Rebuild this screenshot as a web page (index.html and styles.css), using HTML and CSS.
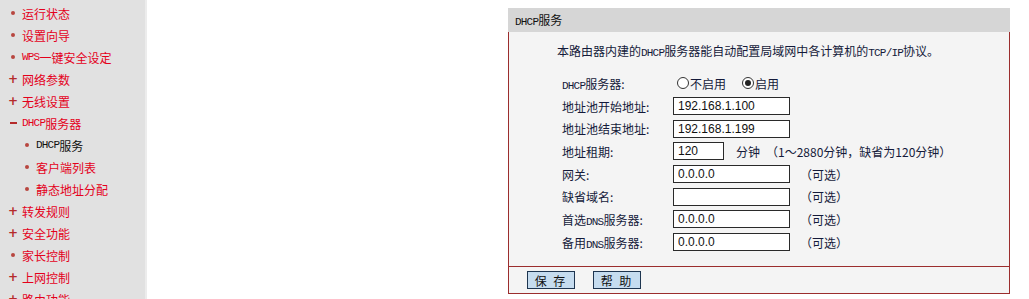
FILE: index.html
```html
<!doctype html>
<html lang="zh-CN">
    <head>
        <meta charset="UTF-8">
        <title>DHCP服务</title>
        <link rel="stylesheet" href="styles.css">
    </head>
    <body>
        <ul class="menu">
            <li class="menu-item"><span class="mark dot"></span>运行状态</li>
            <li class="menu-item"><span class="mark dot"></span>设置向导</li>
            <li class="menu-item"><span class="mark dot"></span><span class="latin">WPS</span>一键安全设定</li>
            <li class="menu-item"><span class="mark plus">+</span>网络参数</li>
            <li class="menu-item"><span class="mark plus">+</span>无线设置</li>
            <li class="menu-item"><span class="mark minus"></span><span class="latin">DHCP</span>服务器</li>
            <li class="menu-item sub current"><span class="mark dot"></span><span class="latin">DHCP</span>服务</li>
            <li class="menu-item sub"><span class="mark dot"></span>客户端列表</li>
            <li class="menu-item sub"><span class="mark dot"></span>静态地址分配</li>
            <li class="menu-item"><span class="mark plus">+</span>转发规则</li>
            <li class="menu-item"><span class="mark plus">+</span>安全功能</li>
            <li class="menu-item"><span class="mark dot"></span>家长控制</li>
            <li class="menu-item"><span class="mark plus">+</span>上网控制</li>
            <li class="menu-item"><span class="mark plus">+</span>路由功能</li>
        </ul>

        <div class="content">
            <div class="panel">
                <div class="panel-title"><span class="latin">DHCP</span>服务</div>
                <div class="panel-body">
                    <p class="intro">本路由器内建的<span class="latin">DHCP</span>服务器能自动配置局域网中各计算机的<span class="latin">TCP/IP</span>协议。</p>
                    <div class="form-grid">
                        <label><span class="latin">DHCP</span>服务器:</label>
                        <div class="field">
                            <label class="radio"><input type="radio" name="dhcp">不启用</label>
                            <label class="radio"><input type="radio" name="dhcp" checked>启用</label>
                        </div>

                        <label for="start-ip">地址池开始地址:</label>
                        <div class="field"><input class="text-box" id="start-ip" type="text" value="192.168.1.100"></div>

                        <label for="end-ip">地址池结束地址:</label>
                        <div class="field"><input class="text-box" id="end-ip" type="text" value="192.168.1.199"></div>

                        <label for="lease">地址租期:</label>
                        <div class="field">
                            <input class="text-box short" id="lease" type="text" value="120">
                            <span class="unit">分钟</span>
                            <span class="hint">（1～2880分钟，缺省为120分钟）</span>
                        </div>

                        <label for="gateway">网关:</label>
                        <div class="field"><input class="text-box" id="gateway" type="text" value="0.0.0.0"><span class="hint optional">（可选）</span></div>

                        <label for="domain">缺省域名:</label>
                        <div class="field"><input class="text-box" id="domain" type="text" value=""><span class="hint optional">（可选）</span></div>

                        <label for="dns1">首选<span class="latin">DNS</span>服务器:</label>
                        <div class="field"><input class="text-box" id="dns1" type="text" value="0.0.0.0"><span class="hint optional">（可选）</span></div>

                        <label for="dns2">备用<span class="latin">DNS</span>服务器:</label>
                        <div class="field"><input class="text-box" id="dns2" type="text" value="0.0.0.0"><span class="hint optional">（可选）</span></div>
                    </div>
                </div>
                <div class="panel-footer">
                    <button class="btn" type="button">保 存</button>
                    <button class="btn" type="button">帮 助</button>
                </div>
            </div>
        </div>
    </body>
</html>
```

FILE: styles.css
```css
html, body {
    margin: 0;
    height: 100%;
    overflow: hidden;
}

body {
    display: flex;
    font-family: "Noto Sans CJK SC", "Liberation Sans", sans-serif;
    font-size: 12px;
    background: #fff;
}

.latin {
    font-family: "Liberation Mono", monospace;
    font-size: 11px;
    letter-spacing: -0.8px;
}

/* left menu */

.menu {
    list-style: none;
    margin: 0;
    padding: 2px 0 0;
    width: 145px;
    flex-shrink: 0;
    background: #e1e1e1;
    border-right: 2px solid #ececec;
}

.menu-item {
    display: flex;
    align-items: center;
    height: 22px;
    color: #e4001b;
    white-space: nowrap;
}

.menu-item.sub {
    padding-left: 14px;
}

.menu-item.current {
    color: #111;
}

.mark {
    display: inline-flex;
    justify-content: center;
    align-items: center;
    width: 10px;
    margin: 0 4px 0 8px;
}

.mark.dot::before {
    content: "";
    width: 4px;
    height: 4px;
    border-radius: 50%;
    background: #b8463f;
}

.mark.plus {
    font-family: "DejaVu Sans", sans-serif;
    font-weight: bold;
    font-size: 12px;
    color: #b52b2b;
}

.mark.minus::before {
    content: "";
    width: 7px;
    height: 2px;
    background: #b52b2b;
}

/* content panel */

.content {
    flex: 1;
    padding: 8px 0 0 361px;
}

.panel {
    width: 502px;
}

.panel-title {
    height: 24px;
    line-height: 24px;
    padding-left: 7px;
    background: #d6d6d6;
    color: #111;
}

.panel-body {
    background: #f4f4f4;
    border-left: 1px solid #9b2d2d;
    border-right: 1px solid #9b2d2d;
    padding: 10px 0 12px;
    color: #141a3a;
}

.intro {
    margin: 0 0 10px 48px;
    line-height: 18px;
}

.form-grid {
    display: grid;
    grid-template-columns: 111px 1fr;
    grid-auto-rows: 22.7px;
    align-items: center;
    margin-left: 53px;
}

.field {
    display: flex;
    align-items: center;
}

.radio {
    display: flex;
    align-items: center;
    margin: 0 12px 0 4px;
}

.radio input {
    appearance: none;
    width: 12px;
    height: 12px;
    margin: 0 1px 0 0;
    border: 1px solid #333;
    border-radius: 50%;
    background: #fff;
    display: grid;
    place-items: center;
}

.radio input:checked::before {
    content: "";
    width: 6px;
    height: 6px;
    border-radius: 50%;
    background: #222;
}

.text-box {
    box-sizing: border-box;
    width: 117px;
    height: 18px;
    margin: 0;
    padding: 0 4px;
    border: 1px solid #2a2a2a;
    background: #fff;
    font-family: "Liberation Sans", sans-serif;
    font-size: 12px;
    color: #111;
}

.text-box.short {
    width: 51px;
}

.unit {
    margin-left: 12px;
}

.hint {
    margin-left: 6px;
}

.hint.optional {
    margin-left: 10px;
}

.panel-footer {
    display: flex;
    gap: 18px;
    padding: 4px 0 4px 18px;
    background: #f4f4f4;
    border: 1px solid #9b2d2d;
}

.btn {
    width: 48px;
    height: 18px;
    padding: 0;
    border: 1px solid #1e3550;
    background: #c6dcef;
    font-family: inherit;
    font-size: 12px;
    color: #111;
    letter-spacing: 2px;
}
```
